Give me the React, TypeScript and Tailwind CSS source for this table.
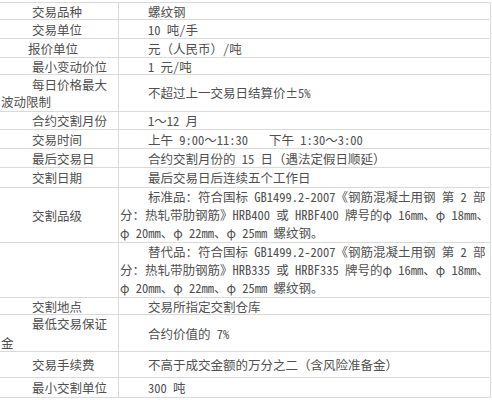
import React from "react";

type Row = {
  h: string;
  label: React.ReactNode;
  labelIndent?: string;
  value: React.ReactNode;
  tight?: boolean;
};

const rows: Row[] = [
  { h: "h-[17px]", label: "交易品种", value: "螺纹钢" },
  { h: "h-[19px]", label: "交易单位", value: "10 吨/手" },
  { h: "h-[19px]", label: "报价单位", labelIndent: "indent-[27px]", value: "元（人民币）/吨" },
  { h: "h-[17px]", label: "最小变动价位", value: "1 元/吨" },
  {
    h: "h-[37px]",
    label: (
      <>
        每日价格最大
        <br />
        波动限制
      </>
    ),
    value: "不超过上一交易日结算价±5%",
    tight: true,
  },
  { h: "h-[18px]", label: "合约交割月份", value: "1～12 月" },
  {
    h: "h-[19px]",
    label: "交易时间",
    value: (
      <>
        上午 9:00～11:30<span className="ml-[21px]">下午 1:30～3:00</span>
      </>
    ),
  },
  { h: "h-[19px]", label: "最后交易日", value: "合约交割月份的 15 日（遇法定假日顺延）" },
  { h: "h-[20px]", label: "交割日期", value: "最后交易日后连续五个工作日" },
  {
    h: "h-[55px]",
    label: "交割品级",
    value: (
      <>
        标准品：符合国标 GB1499.2-2007《钢筋混凝土用钢 第 2 部
        <br />
        分：热轧带肋钢筋》HRB400 或 HRBF400 牌号的φ 16mm、φ 18mm、
        <br />
        φ 20mm、φ 22mm、φ 25mm 螺纹钢。
      </>
    ),
    tight: true,
  },
  {
    h: "h-[55px]",
    label: "",
    value: (
      <>
        替代品：符合国标 GB1499.2-2007《钢筋混凝土用钢 第 2 部
        <br />
        分：热轧带肋钢筋》HRB335 或 HRBF335 牌号的φ 16mm、φ 18mm、
        <br />
        φ 20mm、φ 22mm、φ 25mm 螺纹钢。
      </>
    ),
    tight: true,
  },
  { h: "h-[17px]", label: "交割地点", value: "交易所指定交割仓库" },
  {
    h: "h-[37px]",
    label: (
      <>
        最低交易保证
        <br />
        金
      </>
    ),
    value: "合约价值的 7%",
  },
  { h: "h-[26px]", label: "交易手续费", value: "不高于成交金额的万分之二（含风险准备金）" },
  { h: "h-[20px]", label: "最小交割单位", value: "300 吨" },
];

export default function App() {
  return (
    <div
      className="w-[492px] h-[400px] bg-white pt-[2px] text-[12.5px] leading-[19px] text-[#505050] overflow-hidden"
      style={{ fontFamily: '"Noto Sans Mono CJK SC", "Noto Sans CJK SC", sans-serif' }}
    >
      <div className="w-[491px] border-t border-r border-[#dadada]">
        {rows.map((r, i) => (
          <div key={i} className={`flex border-b border-[#dadada] ${r.h}`}>
            <div
              className={`w-[119px] shrink-0 border-r border-[#dadada] pl-[1px] flex items-center ${
                r.labelIndent ?? "indent-[31px]"
              }`}
            >
              <div className={`whitespace-nowrap ${r.tight ? "leading-[17px]" : ""}`}>{r.label}</div>
            </div>
            <div className="flex-1 pl-[1px] flex items-center indent-[28px]">
              <div className={`whitespace-nowrap ${r.tight ? "leading-[18px]" : ""}`}>{r.value}</div>
            </div>
          </div>
        ))}
      </div>
    </div>
  );
}
